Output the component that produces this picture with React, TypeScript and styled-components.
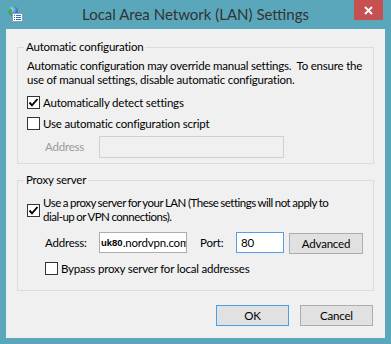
import React from "react";
import styled, { createGlobalStyle } from "styled-components";

const frame = "#5aa7bc";
const face = "#f0f0f0";
const uiFont = `Lato, "Liberation Sans", sans-serif`;

const GlobalStyle = createGlobalStyle`
  html, body { margin: 0; padding: 0; background: ${frame}; }
  body { font-family: ${uiFont}; font-size: 11.5px; letter-spacing: -0.2px; color: #000; }
  * { box-sizing: border-box; }
`;

const Window = styled.div`
  width: 391px;
  height: 344px;
  background: ${frame};
  display: flex;
  flex-direction: column;
  padding: 0 6px 7px;
`;

const TitleBar = styled.div`
  height: 29px;
  flex: none;
  display: grid;
  grid-template-columns: 1fr auto 1fr;
  align-items: start;
`;

const AppIcon = styled.svg`
  justify-self: start;
  margin: 6px 0 0 2px;
`;

const Title = styled.h1`
  margin: 0;
  padding-top: 4px;
  font-size: 15px;
  font-weight: 400;
  line-height: 20px;
  letter-spacing: 0;
  color: #333;
  white-space: nowrap;
`;

const CloseButton = styled.button`
  justify-self: end;
  width: 29px;
  height: 20px;
  margin-right: 2px;
  padding: 0;
  border: 0;
  background: #c75050;
  display: flex;
  align-items: center;
  justify-content: center;
`;

const Client = styled.div`
  flex: 1;
  background: ${face};
  padding: 11px 11px 12px;
  display: flex;
  flex-direction: column;
`;

const Group = styled.fieldset<{ $pad: string; $top?: number }>`
  margin: ${(p) => p.$top ?? 0}px 0 0;
  min-inline-size: 0;
  border: 1px solid #dcdcdc;
  padding: ${(p) => p.$pad};
  display: flex;
  flex-direction: column;
`;

const Legend = styled.legend`
  padding: 0 2px;
  margin-left: -3px;
  line-height: 14px;
`;

const Note = styled.p`
  margin: 0;
  line-height: 14px;
  white-space: nowrap;
`;

const CheckRow = styled.label<{ $top: number; $indent?: number; $lh?: number }>`
  display: flex;
  align-items: center;
  gap: 3px;
  margin: ${(p) => p.$top}px 0 0 ${(p) => p.$indent ?? 0}px;
  line-height: ${(p) => p.$lh ?? 15}px;
  white-space: nowrap;
`;

/* the long proxy caption runs wider in Lato than in Segoe, so it is set a little tighter */
const TightText = styled.span`
  letter-spacing: -0.5px;
  word-spacing: -0.4px;
`;

const Box = styled.span`
  width: 13px;
  height: 13px;
  flex: none;
  border: 1px solid #333;
  background: #fff;
  display: flex;
  align-items: center;
  justify-content: center;
`;

const FieldRow = styled.div<{ $top: number }>`
  display: flex;
  align-items: flex-start;
  margin: ${(p) => p.$top}px 0 0 18px;
`;

const FieldLabel = styled.span<{ $w: number; $h: number; $gap?: number; $off?: boolean }>`
  width: ${(p) => p.$w}px;
  margin-left: ${(p) => p.$gap ?? 0}px;
  line-height: ${(p) => p.$h}px;
  color: ${(p) => (p.$off ? "#9a9a9a" : "#000")};
  white-space: nowrap;
`;

const TextBox = styled.div<{ $w: number; $h: number; $pad?: number; $state?: "off" | "focus" }>`
  width: ${(p) => p.$w}px;
  height: ${(p) => p.$h}px;
  padding-left: ${(p) => p.$pad ?? 4}px;
  border: 1px solid
    ${(p) => (p.$state === "off" ? "#d0d0d0" : p.$state === "focus" ? "#569de5" : "#abadb3")};
  background: ${(p) => (p.$state === "off" ? face : "#fff")};
  display: flex;
  align-items: center;
  overflow: hidden;
  white-space: nowrap;
`;

const HostPrefix = styled.b`
  font: bold 9.5px "Liberation Sans", Arial, sans-serif;
  letter-spacing: 0;
`;

const Button = styled.button<{ $primary?: boolean; $gap?: number; $top?: number }>`
  width: ${(p) => (p.$gap ? 74 : 73)}px;
  height: 21px;
  margin: ${(p) => p.$top ?? 0}px 0 0 ${(p) => p.$gap ?? 0}px;
  padding: 0;
  border: 1px solid ${(p) => (p.$primary ? "#4a9fe6" : "#adadad")};
  background: #e1e1e1;
  font: 11.5px ${uiFont};
  letter-spacing: -0.2px;
  color: #000;
`;

const ButtonRow = styled.div`
  display: flex;
  justify-content: flex-end;
  gap: 11px;
  margin-top: 14px;
  padding-right: 1px;
`;

const Check = ({ on }: { on?: boolean }) => (
  <Box>
    {on && (
      <svg width="11" height="11" viewBox="0 0 11 11">
        <polyline points="1.5,5.5 4,8.3 9.5,2" fill="none" stroke="#000" strokeWidth="1.9" />
      </svg>
    )}
  </Box>
);

const GlobeIcon = () => (
  <AppIcon width="16" height="16" viewBox="0 0 16 16">
    <defs>
      <radialGradient id="globe" cx="35%" cy="35%" r="70%">
        <stop offset="0" stopColor="#a8dcff" />
        <stop offset="1" stopColor="#1f62b6" />
      </radialGradient>
    </defs>
    <circle cx="5" cy="5" r="5" fill="url(#globe)" />
    <path d="M1.4 2.8c1-.5 2 0 2.5 1s-.5 2 .5 3 0 2-1 2.4C1.8 8.5.4 7 .4 5c0-.8.3-1.5 1-2.2z" fill="#43ad3f" />
    <path d="M6 .3c1.2.3 2 .9 2.4 1.6-.8.4-1.7.2-2.1-.5z" fill="#43ad3f" />
    <rect x="4.5" y="7.5" width="10" height="8" fill="#fff" stroke="#8c9db2" />
    <path d="M6 9.5h1M8 9.5h5M6 11.5h1M8 11.5h5M6 13.5h1M8 13.5h5" stroke="#2f6fc0" />
  </AppIcon>
);

export default function App() {
  return (
    <>
      <GlobalStyle />
      <Window>
        <TitleBar>
          <GlobeIcon />
          <Title>Local Area Network (LAN) Settings</Title>
          <CloseButton aria-label="Close">
            <svg width="9" height="9" viewBox="0 0 9 9">
              <path d="M1 1l7 7M8 1l-7 7" stroke="#fff" strokeWidth="1.8" />
            </svg>
          </CloseButton>
        </TitleBar>
        <Client>
          <Group $pad="5px 9px 5px">
            <Legend>Automatic configuration</Legend>
            <Note>
              Automatic configuration may override manual settings.&nbsp; To ensure the
              <br />
              use of manual settings, disable automatic configuration.
            </Note>
            <CheckRow $top={8}>
              <Check on />
              Automatically detect settings
            </CheckRow>
            <CheckRow $top={6}>
              <Check />
              Use automatic configuration script
            </CheckRow>
            <FieldRow $top={5}>
              <FieldLabel $w={54} $h={22} $off>
                Address
              </FieldLabel>
              <TextBox $w={185} $h={22} $state="off" />
            </FieldRow>
          </Group>
          <Group $pad="9px 9px 14px" $top={9}>
            <Legend>Proxy server</Legend>
            <CheckRow $top={0} $lh={14}>
              <Check on />
              <TightText>
                Use a proxy server for your LAN (These settings will not apply to
                <br />
                dial-up or VPN connections).
              </TightText>
            </CheckRow>
            <FieldRow $top={8}>
              <FieldLabel $w={54} $h={21}>
                Address:
              </FieldLabel>
              <TextBox $w={88} $h={21} $pad={1}>
                <HostPrefix>uk80</HostPrefix>.nordvpn.com
              </TextBox>
              <FieldLabel $w={36} $h={21} $gap={13}>
                Port:
              </FieldLabel>
              <TextBox $w={48} $h={21} $state="focus">
                80
              </TextBox>
              <Button $gap={5} $top={1}>
                Advanced
              </Button>
            </FieldRow>
            <CheckRow $top={7} $indent={18}>
              <Check />
              Bypass proxy server for local addresses
            </CheckRow>
          </Group>
          <ButtonRow>
            <Button $primary>OK</Button>
            <Button>Cancel</Button>
          </ButtonRow>
        </Client>
      </Window>
    </>
  );
}
